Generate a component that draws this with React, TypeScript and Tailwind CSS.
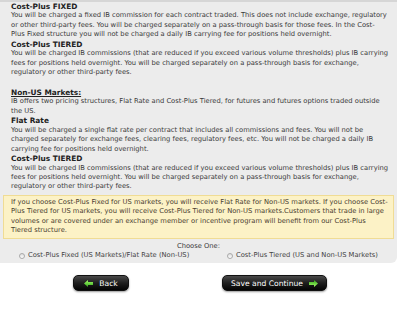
import type { ReactNode } from 'react'

const FONT = { fontFamily: '"DejaVu Sans", Verdana, sans-serif' }

function Lines({ lines }: { lines: string[] }) {
  return (
    <div>
      {lines.map((l, i) => (
        <div key={i} className="whitespace-nowrap">
          {l}
        </div>
      ))}
    </div>
  )
}

function Heading({ children, underline }: { children: ReactNode; underline?: boolean }) {
  return (
    <div className={`font-bold text-[#222] text-[7.4px] ${underline ? 'underline' : ''}`}>{children}</div>
  )
}

function Arrow({ dir }: { dir: 'left' | 'right' }) {
  return (
    <svg width="9" height="7" viewBox="0 0 9 7" className={dir === 'left' ? '' : 'rotate-180'}>
      <defs>
        <linearGradient id={`g-${dir}`} x1="0" y1="0" x2="0" y2="1">
          <stop offset="0" stopColor="#a6ff6a" />
          <stop offset="1" stopColor="#2fa318" />
        </linearGradient>
      </defs>
      <path d="M0 3.5 L4 0 L4 2 L9 2 L9 5 L4 5 L4 7 Z" fill={`url(#g-${dir})`} />
    </svg>
  )
}

function Button({ children }: { children: ReactNode }) {
  return (
    <button className="flex h-[16px] w-full items-center justify-center gap-[6px] whitespace-nowrap rounded-[5px] border border-[#111] bg-gradient-to-b from-[#4a4a4a] via-[#1e1e1e] to-[#050505] text-[7.6px] text-white shadow-[0_1px_2px_rgba(0,0,0,0.4)]">
      {children}
    </button>
  )
}

function Radio({ label }: { label: string }) {
  return (
    <label className="flex items-center gap-[3px] whitespace-nowrap">
      <span className="inline-block h-[6px] w-[6px] rounded-full border border-[#aaa] bg-gradient-to-b from-[#ddd] to-white" />
      <span>{label}</span>
    </label>
  )
}

export default function App() {
  return (
    <div className="h-[314px] w-[400px] overflow-hidden bg-white text-[6.75px] leading-[9.44px] text-[#3a3a3a]" style={FONT}>
      <div className="w-[397px] rounded-br-[6px] border-t-[2px] border-[#d6d6d6] bg-[#ececec] pb-[3px]">
        <div className="pl-[11px]">
          <Heading>Cost-Plus FIXED</Heading>
          <Lines
            lines={[
              'You will be charged a fixed IB commission for each contract traded. This does not include exchange, regulatory',
              'or other third-party fees. You will be charged separately on a pass-through basis for those fees. In the Cost-',
              'Plus Fixed structure you will not be charged a daily IB carrying fee for positions held overnight.',
            ]}
          />
          <Heading>Cost-Plus TIERED</Heading>
          <Lines
            lines={[
              'You will be charged IB commissions (that are reduced if you exceed various volume thresholds) plus IB carrying',
              'fees for positions held overnight. You will be charged separately on a pass-through basis for exchange,',
              'regulatory or other third-party fees.',
            ]}
          />
          <div className="mt-[10.5px]">
            <Heading underline>Non-US Markets:</Heading>
          </div>
          <Lines
            lines={[
              'IB offers two pricing structures, Flat Rate and Cost-Plus Tiered, for futures and futures options traded outside',
              'the US.',
            ]}
          />
          <Heading>Flat Rate</Heading>
          <Lines
            lines={[
              'You will be charged a single flat rate per contract that includes all commissions and fees. You will not be',
              'charged separately for exchange fees, clearing fees, regulatory fees, etc. You will not be charged a daily IB',
              'carrying fee for positions held overnight.',
            ]}
          />
          <Heading>Cost-Plus TIERED</Heading>
          <Lines
            lines={[
              'You will be charged IB commissions (that are reduced if you exceed various volume thresholds) plus IB carrying',
              'fees for positions held overnight. You will be charged separately on a pass-through basis for exchange,',
              'regulatory or other third-party fees.',
            ]}
          />
        </div>
        <div className="mx-[3px] mt-[3px] border border-[#f0dc94] bg-[#fcf2c6] py-[2px] pl-[7px] text-[#4a4030]">
          <Lines
            lines={[
              'If you choose Cost-Plus Fixed for US markets, you will receive Flat Rate for Non-US markets. If you choose Cost-',
              'Plus Tiered for US markets, you will receive Cost-Plus Tiered for Non-US markets.Customers that trade in large',
              'volumes or are covered under an exchange member or incentive program will benefit from our Cost-Plus',
              'Tiered structure.',
            ]}
          />
        </div>
        <div className="mt-[3px] text-center">Choose One:</div>
        <div className="flex pl-[19px] text-[#444]">
          <div className="w-[208px]">
            <Radio label="Cost-Plus Fixed (US Markets)/Flat Rate (Non-US)" />
          </div>
          <Radio label="Cost-Plus Tiered (US and Non-US Markets)" />
        </div>
      </div>
      <div className="mt-[12px] flex">
        <div className="ml-[73px] w-[56px]">
          <Button>
            <Arrow dir="left" />
            <span>Back</span>
          </Button>
        </div>
        <div className="ml-[93px] w-[105px]">
          <Button>
            <span>Save and Continue</span>
            <Arrow dir="right" />
          </Button>
        </div>
      </div>
    </div>
  )
}
